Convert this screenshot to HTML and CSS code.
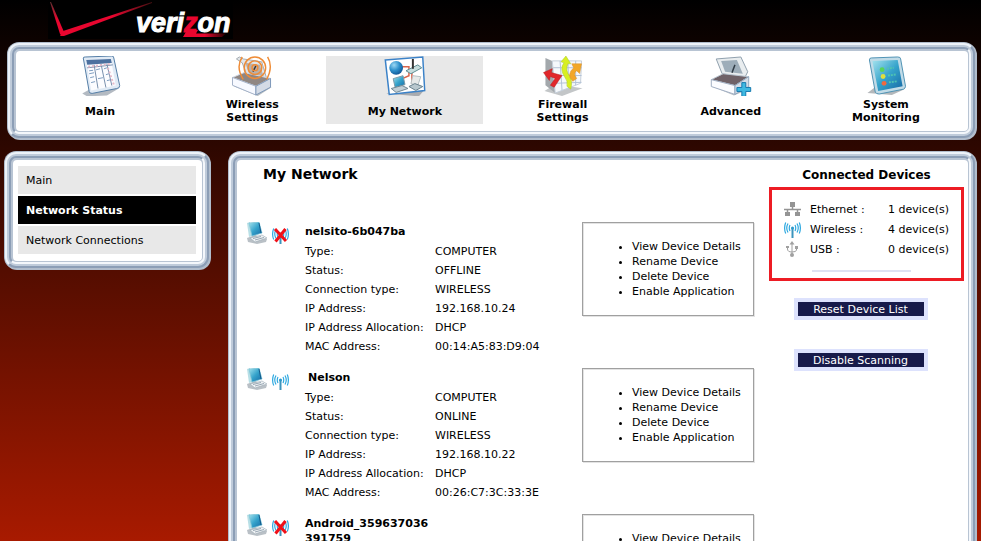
FILE: index.html
```
<!DOCTYPE html>
<html lang="en">

<head>
  <meta charset="UTF-8">
  <meta name="viewport" content="width=device-width, initial-scale=1.0">
  <title>My Network</title>
  <link rel="stylesheet" href="styles.css">
</head>

<body>

  <!-- shared icons -->
  <svg class="sprite" width="0" height="0" aria-hidden="true">
    <defs>
      <linearGradient id="screen" x1="0" y1="0" x2="1" y2="1">
        <stop offset="0" stop-color="#a5e3ee" />
        <stop offset="0.5" stop-color="#35a3cb" />
        <stop offset="1" stop-color="#1468a5" />
      </linearGradient>
      <linearGradient id="fade" x1="0" y1="0" x2="1" y2="0">
        <stop offset="0" stop-color="#e8062f" />
        <stop offset="0.5" stop-color="#e8062f" />
        <stop offset="1" stop-color="#200" />
      </linearGradient>
      <linearGradient id="fade-left" gradientUnits="userSpaceOnUse" x1="0" y1="2" x2="0" y2="20">
        <stop offset="0" stop-color="#613030" />
        <stop offset="1" stop-color="#e8062f" />
      </linearGradient>
      <linearGradient id="fade-right" gradientUnits="userSpaceOnUse" x1="65" y1="0" x2="105" y2="0">
        <stop offset="0" stop-color="#e8062f" />
        <stop offset="1" stop-color="#401010" />
      </linearGradient>
      <radialGradient id="globe" cx="0.35" cy="0.3" r="0.8">
        <stop offset="0" stop-color="#9cd8f4" />
        <stop offset="0.5" stop-color="#2c8fcb" />
        <stop offset="1" stop-color="#0b4c8c" />
      </radialGradient>
    </defs>
    <symbol id="icon-pc" viewBox="0 0 22 22">
      <path d="M1 16L9 13L21 17L20 20L11 22L2 20Z" fill="#b9c0c6" />
      <path d="M1 1L4 0L6 14L3 15Z" fill="#b8dfe6" />
      <path d="M3 1L13 0L16 11L6 14Z" fill="url(#screen)" stroke="#7cc3d5" stroke-width="0.7" />
      <path d="M13 1L15 11" stroke="#135c8c" stroke-width="1" />
      <path d="M4 16L16 13L21 16L9 20Z" fill="#f0f3f5" stroke="#9ba9b3" stroke-width="0.6" />
      <path d="M7 16.500L15 14.500M9 18L18 15.500" stroke="#8293a2" stroke-width="0.8" />
    </symbol>
    <symbol id="icon-wifi" viewBox="0 0 17 17">
      <path d="M7.500 7H9.500V17H7.500Z" fill="#3b94bd" />
      <circle cx="8.500" cy="7" r="1.500" fill="#2c9acb" />
      <path d="M6 4Q4.500 7 6 10M11 4Q12.500 7 11 10M4 2.500Q1.500 7 4 11.500M13 2.500Q15.500 7 13 11.500M1.700 1.500Q-0.500 7 1.700 12.500M15.300 1.500Q17.500 7 15.300 12.500" fill="none" stroke="#2fa9e0" stroke-width="1.200" />
    </symbol>
    <symbol id="icon-wifi-off" viewBox="0 0 17 17">
      <use href="#icon-wifi" />
      <path d="M3 2L14 14M13.500 2L3.500 14.500" stroke="#f01018" stroke-width="3" />
    </symbol>
  </svg>

  <header class="header">
    <a href="#" class="logo" aria-label="verizon">
      <svg width="185" height="39" viewBox="0 0 185 39">
        <path d="M2 2L3 2L16 32L14 36L12 34Z" fill="url(#fade-left)" />
        <path d="M12 36L15 31L104 2L104 3L16 36Z" fill="url(#fade-right)" />
        <path d="M139 30L150 30L148 33.500L178 33.500L174 37L135 37Z" fill="url(#fade)" />
        <text class="logo-text" x="88" y="32">veri<tspan class="logo-z">z</tspan>on</text>
      </svg>
    </a>
  </header>

  <div class="frame frame-top">
    <div class="rim">
      <nav class="panel tabs">
        <a href="#" class="tab">
          <svg width="42" height="41" viewBox="0 0 42 41">
            <path d="M3 38L12 33L40 33L28 40L8 41Z" fill="#b3bac2" />
            <path d="M4 2Q4 1 6 1L33 0Q35 0 35 2L41 30Q41 33 38 33L13 38Q10 38 10 36Z" fill="#e0eaf5" stroke="#527ca5" />
            <path d="M7 4L32 3L37 30L12 35Z" fill="#fcfcff" />
            <path d="M7 4L32 3L33 7L8 9Z" fill="#4c709f" />
            <path d="M8 12L34 9M15 9L19 33M22 8L27 32M28 8L33 30" stroke="#788eac" stroke-width="1" fill="none" />
            <path d="M10 15L14 14.500M10 18L15 17M11 22L15 21M12 27L16 26M17 14L21 13M19 23L24 22M25 13L28 12M27 19L30 18M28 25L32 24" stroke="#7e9cc0" stroke-width="1" />
            <path d="M29 12L35 29M9 11L32 8" stroke="#e3b9c8" stroke-width="2" stroke-dasharray="2 2" />
          </svg>
          <span>Main</span>
        </a>
        <a href="#" class="tab">
          <svg width="42" height="41" viewBox="0 0 42 41">
            <path d="M2 31L27 41L41 32L34 27Z" fill="#b5bbc0" />
            <path d="M5 3L8 1L12 3L31 6L36 23L16 20L11 7Z" fill="#e2e6e9" stroke="#a4abb1" />
            <path d="M14 7L29 9L33 21L18 18Z" fill="#b9b1ab" />
            <path d="M1 22L13 17L40 23L25 31Z" fill="#908783" stroke="#d1d8e3" />
            <path d="M1 22L25 31L25 40L1 30Z" fill="#f7f9ff" stroke="#a2b1c7" />
            <path d="M25 31L40 23L40 32L25 40Z" fill="#d4dbe6" stroke="#7b96b8" />
            <path d="M22 16L25 10" stroke="#333" stroke-width="1.500" />
            <g fill="none" stroke="#ef8c36" stroke-width="1.500">
              <circle cx="24" cy="12" r="3" />
              <circle cx="24" cy="12" r="7" />
              <circle cx="24" cy="12" r="11" />
              <path d="M11 1Q4 11 12 24M37 1Q43 11 36 24" />
            </g>
          </svg>
          <span>Wireless<br>Settings</span>
        </a>
        <a href="#" class="tab tab-current">
          <svg width="42" height="41" viewBox="0 0 42 41">
            <path d="M2 38L20 32L41 34L35 41Z" fill="#a9abaf" />
            <path d="M1 4L39 1L41 35L5 39Z" fill="#fff" stroke="#3b82c8" stroke-width="1.500" />
            <path d="M16 11H25V20L16 24M28 17V28" fill="none" stroke="#d8654c" stroke-width="1.500" />
            <circle cx="12" cy="12" r="7" fill="url(#globe)" />
            <path d="M22 15L34 9L38 12L27 18Z" fill="#c6dddd" stroke="#5f8d93" />
            <path d="M29 3V13" stroke="#333" stroke-width="2" />
            <path d="M9 23L19 20L21 29L11 32Z" fill="url(#screen)" stroke="#7b99a8" />
            <path d="M7 33L18 30L24 33L12 37Z" fill="#c2cfd6" stroke="#6f8793" />
            <path d="M29 20L37 21L34 30L27 28Z" fill="#e6e9e8" stroke="#b3bfc2" />
            <path d="M25 31L31 28L39 31L32 35Z" fill="#b8c8ce" stroke="#69818c" />
          </svg>
          <span>My Network</span>
        </a>
        <a href="#" class="tab">
          <svg width="42" height="41" viewBox="0 0 42 41">
            <path d="M2 36L13 29L41 33L20 41Z" fill="#c3c6c8" />
            <path d="M3 2L10 5L13 38L3 30Z" fill="#a3a8ac" />
            <path d="M10 5L40 5L39 28L13 38Z" fill="#f5f8fb" stroke="#c4ced9" />
            <path d="M11 12H40M11 20H40M12 28L40 27M18 5L20 35M26 5L27 33M34 5V30" stroke="#b1c1d6" stroke-width="1" />
            <path d="M1 17L10 13L9 17L20 20L12 32L8 30L13 23L8 21L7 25Z" fill="#e1272b" stroke="#b7191e" stroke-width="0.5" />
            <path d="M24 0L29 8L26 8Q23 15 28 21Q31 26 29 34L25 31Q26 25 23 22Q17 13 22 7L19 6Z" fill="#d8ef22" stroke="#a7c82b" stroke-width="0.5" />
            <path d="M40 8L30 8L32 12Q24 19 31 26L35 23Q31 18 35 15L38 18Z" fill="#f2a728" stroke="#d88b24" stroke-width="0.5" />
          </svg>
          <span>Firewall<br>Settings</span>
        </a>
        <a href="#" class="tab">
          <svg width="42" height="41" viewBox="0 0 42 41">
            <path d="M2 31L24 40L41 33L35 25Z" fill="#bbc0c5" />
            <path d="M6 3L31 1L38 16L35 22L12 18Z" fill="#e9edef" stroke="#8fa0ad" />
            <path d="M11 5L27 4L33 18L15 16Z" fill="#9dadb9" />
            <path d="M22 17L25 9" stroke="#303c46" stroke-width="1.500" />
            <path d="M1 24L13 18L39 21L25 30Z" fill="#6f6268" stroke="#bac6d1" />
            <path d="M1 24L25 30L25 39L1 31Z" fill="#fbfcff" stroke="#a0aec2" />
            <path d="M25 30L39 21L39 31L25 39Z" fill="#d5dce6" stroke="#8fa7bd" />
            <path d="M32 27H36V32H41V36H36V41H32V36H27V32H32Z" fill="#3fb9e1" stroke="#1579af" />
          </svg>
          <span>Advanced</span>
        </a>
        <a href="#" class="tab">
          <svg width="42" height="41" viewBox="0 0 42 41">
            <path d="M2 38L11 31L40 34L27 40Z" fill="#b4b8bb" />
            <path d="M4 4Q4 2 6 2L33 1Q36 1 36 3L41 31Q41 33 39 34L14 39Q11 39 10 37Z" fill="#c1dbe7" stroke="#4d91b3" />
            <path d="M7 5L33 4L38 31L13 36Z" fill="url(#screen)" />
            <circle cx="17" cy="14" r="2.500" fill="#58d35b" />
            <circle cx="18" cy="21" r="2.500" fill="#e1df3d" />
            <circle cx="19" cy="28" r="2.500" fill="#ef6940" />
            <path d="M22 13L29 12M23 20L31 19M24 27L32 26" stroke="#4ec2b3" stroke-width="2" stroke-dasharray="2 1" />
          </svg>
          <span>System<br>Monitoring</span>
        </a>
      </nav>
    </div>
  </div>

  <div class="content">
    <div class="frame frame-side">
      <div class="rim">
        <nav class="panel menu">
          <a href="#" class="menu-item">Main</a>
          <a href="#" class="menu-item menu-item-current">Network Status</a>
          <a href="#" class="menu-item">Network Connections</a>
        </nav>
      </div>
    </div>

    <div class="frame frame-main">
      <div class="rim">
        <main class="panel main">
          <section class="devices">
            <h1 class="title">My Network</h1>

            <div class="device">
              <svg class="pc" width="22" height="22"><use href="#icon-pc" /></svg>
              <svg class="signal" width="17" height="17"><use href="#icon-wifi-off" /></svg>
              <table class="info">
                <tr><th colspan="2" class="name">nelsito-6b047ba</th></tr>
                <tr><th>Type:</th><td>COMPUTER</td></tr>
                <tr><th>Status:</th><td>OFFLINE</td></tr>
                <tr><th>Connection type:</th><td>WIRELESS</td></tr>
                <tr><th>IP Address:</th><td>192.168.10.24</td></tr>
                <tr><th>IP Address Allocation:</th><td>DHCP</td></tr>
                <tr><th>MAC Address:</th><td>00:14:A5:83:D9:04</td></tr>
              </table>
              <ul class="actions">
                <li><a href="#">View Device Details</a></li>
                <li><a href="#">Rename Device</a></li>
                <li><a href="#">Delete Device</a></li>
                <li><a href="#">Enable Application</a></li>
              </ul>
            </div>

            <div class="device">
              <svg class="pc" width="22" height="22"><use href="#icon-pc" /></svg>
              <svg class="signal" width="17" height="17"><use href="#icon-wifi" /></svg>
              <table class="info">
                <tr><th colspan="2" class="name name-edited">Nelson</th></tr>
                <tr><th>Type:</th><td>COMPUTER</td></tr>
                <tr><th>Status:</th><td>ONLINE</td></tr>
                <tr><th>Connection type:</th><td>WIRELESS</td></tr>
                <tr><th>IP Address:</th><td>192.168.10.22</td></tr>
                <tr><th>IP Address Allocation:</th><td>DHCP</td></tr>
                <tr><th>MAC Address:</th><td>00:26:C7:3C:33:3E</td></tr>
              </table>
              <ul class="actions">
                <li><a href="#">View Device Details</a></li>
                <li><a href="#">Rename Device</a></li>
                <li><a href="#">Delete Device</a></li>
                <li><a href="#">Enable Application</a></li>
              </ul>
            </div>

            <div class="device">
              <svg class="pc" width="22" height="22"><use href="#icon-pc" /></svg>
              <svg class="signal" width="17" height="17"><use href="#icon-wifi-off" /></svg>
              <table class="info">
                <tr><th colspan="2" class="name">Android_359637036<br>391759</th></tr>
              </table>
              <ul class="actions">
                <li><a href="#">View Device Details</a></li>
              </ul>
            </div>
          </section>

          <aside class="summary">
            <h2 class="summary-title">Connected Devices</h2>
            <div class="counts">
              <table>
                <tr>
                  <td class="count-icon">
                    <svg width="17" height="17" viewBox="0 0 17 17">
                      <path d="M6 1H11V6H6ZM1 11H6V15H1ZM11 11H16V15H11Z" fill="#949494" />
                      <path d="M8.500 6V9M3.500 11V8.500H13.500V11M0 8.500H17" fill="none" stroke="#949494" stroke-width="1.500" />
                    </svg>
                  </td>
                  <th>Ethernet :</th>
                  <td class="count">1 device(s)</td>
                </tr>
                <tr>
                  <td class="count-icon"><svg width="17" height="17"><use href="#icon-wifi" /></svg></td>
                  <th>Wireless :</th>
                  <td class="count">4 device(s)</td>
                </tr>
                <tr>
                  <td class="count-icon">
                    <svg width="17" height="17" viewBox="0 0 17 17">
                      <path d="M8 0L10.500 3.500H5.500Z" fill="#a0a0a0" />
                      <circle cx="8" cy="14" r="2" fill="#a0a0a0" />
                      <path d="M2 5H5V7H2ZM11 5H14V8H11Z" fill="#a0a0a0" />
                      <path d="M8 3V14M3.500 6V8Q3.500 11 8 11M12.500 7V9Q12.500 11 8 11" fill="none" stroke="#a0a0a0" stroke-width="1" />
                    </svg>
                  </td>
                  <th>USB :</th>
                  <td class="count">0 device(s)</td>
                </tr>
              </table>
              <hr class="line">
            </div>
            <button type="button" class="button">Reset Device List</button>
            <button type="button" class="button">Disable Scanning</button>
          </aside>
        </main>
      </div>
    </div>
  </div>

</body>

</html>
```
FILE: styles.css
```
* {
  box-sizing: border-box;
}

body {
  margin: 0;
  height: 100vh;
  overflow: hidden;
  display: flex;
  flex-direction: column;
  background: linear-gradient(#000, #a81a00);
  color: #000;
  font-family: Verdana, "DejaVu Sans", sans-serif;
  font-size: 11px;
  line-height: 13px;
}

a {
  color: inherit;
  text-decoration: none;
}

svg {
  display: block;
}

table {
  border-collapse: collapse;
}

th,
td {
  padding: 0;
  font-weight: normal;
  text-align: left;
}

.sprite {
  position: absolute;
}

/* header */

.header {
  flex: none;
  height: 43px;
  padding-left: 48px;
}

.logo {
  display: block;
  width: 185px;
  background: #000;
}

.logo-text {
  font-family: "Liberation Sans", Arial, sans-serif;
  font-size: 27px;
  font-weight: bold;
  font-style: italic;
  fill: #fff;
  stroke: #fff;
  stroke-width: 1px;
}

.logo-z {
  fill: #e8062f;
  stroke: #e8062f;
}

/* rounded metal frame */

.frame {
  padding: 2px;
  border: 2px solid;
  border-color: #edf2f8 #8c9eb6 #8c9eb6 #edf2f8;
  border-radius: 11px;
  background: #bfcbda;
  box-shadow: 0 0 0 1px #b1bdcc, 1px 1px 0 1px #b1bdcc;
}

.rim {
  padding: 2px 1px 1px 2px;
  border: 2px solid;
  border-color: #8c9eb6 #f4f7fb #f4f7fb #8c9eb6;
  border-radius: 7px;
  background: #b8c4d3;
}

.panel {
  border-radius: 4px;
  background: #fff;
}

.frame-top {
  flex: none;
  margin: 0 6px 0 8px;
}

/* top tabs */

.tabs {
  display: grid;
  grid-template-columns: 156fr 148fr 157fr 158fr 178fr 132fr;
  padding: 5px 16px 7px 6px;
}

.tab {
  display: flex;
  flex-direction: column;
  align-items: center;
  height: 68px;
  font-weight: bold;
  text-align: center;
}

.tab span {
  display: flex;
  align-items: center;
  height: 28px;
  padding-top: 2px;
}

.tab-current {
  background: #e8e8e8;
}

/* columns */

.content {
  flex: 1;
  min-height: 0;
  display: flex;
  align-items: flex-start;
  gap: 20px;
  padding: 14px 6px 0 5px;
}

.frame-side {
  flex: none;
  width: 204px;
}

.menu {
  display: flex;
  flex-direction: column;
  gap: 2px;
  padding: 6px 6px 7px 5px;
}

.menu-item {
  padding: 2px 8px 0;
  line-height: 26px;
  background: #e8e8e8;
}

.menu-item-current {
  background: #000;
  color: #fff;
  font-weight: bold;
}

.frame-main {
  flex: 1;
}

.main {
  display: flex;
}

/* device list */

.devices {
  flex: 1;
  padding-left: 9px;
}

.title {
  margin: 6px 0 40px 17px;
  font-size: 14px;
  line-height: 16px;
}

.device {
  display: flex;
  align-items: flex-start;
  height: 146px;
}

.signal {
  margin: 5px 16px 0 4px;
}

.info {
  width: 277px;
}

.info th {
  width: 130px;
  height: 19px;
  white-space: nowrap;
}

.info .name {
  height: 20px;
  padding-top: 2px;
  font-weight: bold;
  line-height: 15px;
  vertical-align: top;
}

.info .name-edited {
  padding-left: 3px;
}

.actions {
  width: 172px;
  height: 94px;
  margin: 0;
  padding: 16px 0 0 49px;
  border: 1px solid #a0a0a0;
  box-shadow: 1px 1px #e3e3e3, inset 1px 1px #e3e3e3;
  line-height: 15px;
  white-space: nowrap;
}

/* right column */

.summary {
  flex: none;
  width: 195px;
  margin-right: 4px;
  display: flex;
  flex-direction: column;
  align-items: center;
}

.summary-title {
  margin: 7px 0 4px;
  font-size: 12px;
  line-height: 16px;
}

.counts {
  align-self: stretch;
  height: 94px;
  padding: 9px 12px 0 12px;
  border: 3px solid #ed1c24;
}

.counts table {
  width: 100%;
}

.counts tr {
  height: 20px;
}

.count-icon {
  width: 26px;
}

.count {
  text-align: right;
}

.line {
  width: 99px;
  height: 2px;
  margin: 11px 0 0 28px;
  border: 0;
  background: #dfe2f2;
}

.button {
  width: 134px;
  height: 22px;
  margin: 17px 12px 12px 0;
  padding: 0;
  border: 4px solid #dde2fd;
  background: #171a4a;
  color: #fff;
  font: inherit;
}
```
